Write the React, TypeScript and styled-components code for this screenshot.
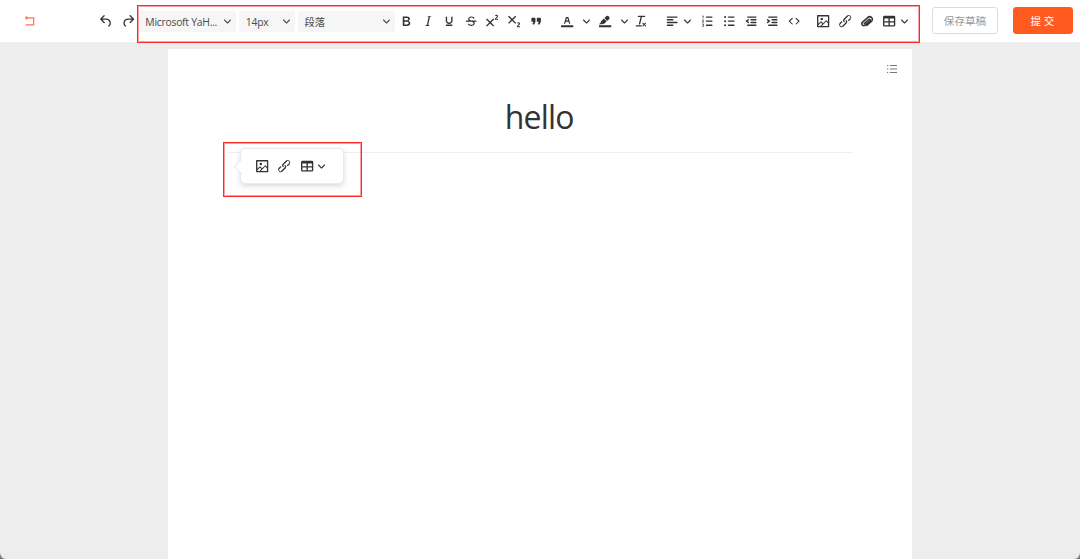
import React from 'react';
import styled, { createGlobalStyle } from 'styled-components';

const GlobalStyle = createGlobalStyle`
  * { box-sizing: border-box; }
  body {
    margin: 0;
    background: #ededed;
    font-family: "Open Sans", "Noto Sans CJK SC", sans-serif;
    overflow: hidden;
  }
  button { font-family: inherit; padding: 0; background: none; border: 0; }
`;

const Screen = styled.div`
  position: relative;
  display: flex;
  flex-direction: column;
  width: 1080px;
  height: 559px;
  overflow: hidden;
`;

const Header = styled.header`
  display: flex;
  align-items: center;
  height: 42px;
  flex: none;
  background: #fff;
`;

const BackButton = styled.button`
  display: flex;
  justify-content: center;
  width: 60px;
  margin-right: 34.5px;
`;

const ToolButton = styled.button<{ $width?: number; $left?: number }>`
  display: flex;
  align-items: center;
  justify-content: center;
  flex: none;
  width: ${(p) => p.$width ?? 21.7}px;
  height: 24px;
  margin-left: ${(p) => p.$left ?? 0}px;
  color: #333;
`;

const Tools = styled.div<{ $left?: number }>`
  display: flex;
  flex: none;
  align-items: center;
  margin-left: ${(p) => p.$left ?? 0}px;
  padding-top: 1px;
`;

const Glyph = styled.svg<{ $size?: number }>`
  display: block;
  flex: none;
  width: ${(p) => p.$size ?? 16.3}px;
  height: ${(p) => p.$size ?? 16.3}px;
  fill: currentColor;
`;

const Select = styled.div<{ $width: number }>`
  display: flex;
  align-items: center;
  justify-content: space-between;
  width: ${(p) => p.$width}px;
  height: 21px;
  margin-right: 3.3px;
  padding: 0 5px 0 6.5px;
  border-radius: 2px;
  background: #f6f6f6;
  color: #4a4a4a;
  font-size: 10.4px;
  line-height: 21px;
  white-space: nowrap;
`;

const SelectLabel = styled.span<{ $spacing?: number }>`
  padding-top: 2px;
  letter-spacing: ${(p) => p.$spacing ?? 0}px;
`;

const ActionButton = styled.button<{ $primary?: boolean }>`
  flex: none;
  width: ${(p) => (p.$primary ? 60 : 66)}px;
  height: 27px;
  border: 1px solid ${(p) => (p.$primary ? '#ff5b21' : '#dcdcdc')};
  border-radius: 3px;
  background: ${(p) => (p.$primary ? '#ff5b21' : '#fff')};
  color: ${(p) => (p.$primary ? '#fff' : '#999')};
  font-size: 10.6px;
  line-height: 26px;
`;

const Actions = styled.div`
  display: flex;
  gap: 14.5px;
  margin-left: auto;
  padding-right: 7.5px;
  padding-bottom: 1px;
`;

const Page = styled.main`
  position: relative;
  flex: 1;
  width: 744px;
  margin: 7px auto 0;
  padding: 44px 59px 0 60px;
  background: #fff;
`;

const Outline = styled.div`
  position: absolute;
  top: 14px;
  right: 14px;
  line-height: 0;
  color: #777;
`;

const Title = styled.h1`
  height: 60px;
  margin: 0;
  padding-right: 2.5px;
  border-bottom: 1px solid #efefef;
  color: #333;
  font-size: 32px;
  font-weight: 400;
  line-height: 48px;
  letter-spacing: -0.8px;
  text-align: center;
`;

const InsertBar = styled.div`
  position: absolute;
  top: 99px;
  left: 72px;
  display: flex;
  align-items: center;
  width: 104px;
  height: 36px;
  padding-left: 10.8px;
  padding-top: 1px;
  border: 1px solid #e9eaec;
  border-radius: 5px;
  background: #fff;
  box-shadow: 0 2px 5px rgba(34, 47, 62, 0.18);

  &::before {
    content: '';
    position: absolute;
    left: -5.5px;
    top: 12px;
    width: 10px;
    height: 10px;
    border-left: 1px solid #e9eaec;
    border-bottom: 1px solid #e9eaec;
    background: #fff;
    transform: rotate(45deg);
  }
`;

const Frame = styled.div<{ $x: number; $y: number; $w: number; $h: number }>`
  position: absolute;
  left: ${(p) => p.$x}px;
  top: ${(p) => p.$y}px;
  width: ${(p) => p.$w}px;
  height: ${(p) => p.$h}px;
  border: 1px solid #fd2a2a;
  box-shadow: inset 0 0 0 1px rgba(253, 42, 42, 0.45);
  pointer-events: none;
`;

const WindowCorner = styled.svg<{ $right?: boolean }>`
  position: absolute;
  bottom: 0;
  ${(p) => (p.$right ? 'right: 0; transform: scaleX(-1);' : 'left: 0;')}
  width: 6px;
  height: 6px;
  fill: #777;
`;

const line = (x: number, y: number, w: number) => `M${x} ${y}h${w}a1 1 0 0 1 0 2h${-w}a1 1 0 0 1 0-2Z`;

const cross = 'M15 9.4 10.4 14l4.6 4.6-1.4 1.4L9 15.4 4.4 20 3 18.6 7.6 14 3 9.4 4.4 8 9 12.6 13.6 8 15 9.4Z';

const paths = {
  undo: 'M6.4 8H12c3.7 0 6.2 2 6.8 5.1.6 2.7-.4 5.6-2.3 6.8a1 1 0 0 1-1-1.8c1.1-.6 1.8-2.7 1.4-4.6-.5-2.1-2.1-3.5-4.9-3.5H6.4l3.3 3.3a1 1 0 1 1-1.4 1.4l-5-5a1 1 0 0 1 0-1.4l5-5a1 1 0 0 1 1.4 1.4L6.4 8Z',
  redo: 'M17.6 10H12c-2.8 0-4.4 1.4-4.9 3.5-.4 2 .3 4 1.4 4.6a1 1 0 1 1-1 1.8c-2-1.2-2.9-4.1-2.3-6.8.6-3 3-5.1 6.8-5.1h5.6l-3.3-3.3a1 1 0 1 1 1.4-1.4l5 5a1 1 0 0 1 0 1.4l-5 5a1 1 0 0 1-1.4-1.4l3.3-3.3Z',
  bold: 'M7.8 19c-.3 0-.5 0-.6-.2l-.2-.5V5.7c0-.2 0-.4.2-.5l.6-.2h5c1.5 0 2.7.3 3.5 1 .7.6 1.1 1.4 1.1 2.5a3 3 0 0 1-.6 1.9c-.4.6-1 1-1.6 1.2.4.1.9.3 1.3.6s.8.7 1 1.2c.4.4.5 1 .5 1.6 0 1.3-.4 2.3-1.3 3-.8.7-2.1 1-3.8 1H7.8Zm5-8.3c.6 0 1.2-.1 1.6-.5.4-.3.6-.7.6-1.3 0-1.1-.8-1.7-2.3-1.7H9.3v3.5h3.4Zm.5 6c.7 0 1.3-.1 1.7-.4.4-.4.6-.9.6-1.5s-.2-1-.7-1.4c-.4-.3-1-.4-2-.4H9.4v3.8h4Z',
  italic: 'm16.7 4.7-.1.9h-.3c-.6 0-1 0-1.4.3-.3.3-.4.6-.5 1.1l-2.1 9.8v.6c0 .5.4.8 1.4.8h.2l-.2.8H8l.2-.8h.2c1.1 0 1.8-.5 2-1.5l2-9.8.1-.5c0-.6-.4-.8-1.4-.8h-.3l.2-.9h5.8Z',
  underline: 'M16 5c.6 0 1 .4 1 1v5.5a4 4 0 0 1-.4 1.8l-1 1.4a5.3 5.3 0 0 1-5.5 1 5 5 0 0 1-1.6-1c-.5-.4-.8-.9-1.1-1.4a4 4 0 0 1-.4-1.8V6c0-.6.4-1 1-1s1 .4 1 1v5.5c0 .3 0 .6.2 1l.6.7a3.3 3.3 0 0 0 2.2.8 3.4 3.4 0 0 0 2.2-.8c.3-.2.4-.5.6-.8l.2-.9V6c0-.6.4-1 1-1ZM8 17h8c.6 0 1 .4 1 1s-.4 1-1 1H8a1 1 0 0 1 0-2Z',
  strike: 'M15.6 8.5c-.5-.7-1-1.1-1.3-1.3-.6-.4-1.3-.6-2-.6-2.7 0-2.8 1.7-2.8 2.1 0 1.6 1.8 2 3.2 2.3 4.4.9 4.6 2.8 4.6 3.9 0 1.4-.7 4.1-5 4.1A6.2 6.2 0 0 1 7 16.4l1.5-1.1c.4.6 1.6 2 3.7 2 1.6 0 2.5-.4 3-1.2.4-.8.3-2-.8-2.6-.7-.4-1.6-.7-2.9-1-1-.2-3.9-.8-3.9-3.6C7.6 6 10.3 5 12.4 5c2.9 0 4.2 1.6 4.7 2.4l-1.5 1.1Z' + line(5, 11, 14),
  quote: 'M7.5 17h.9c.4 0 .7-.2.9-.6L11 13V8c0-.6-.4-1-1-1H6a1 1 0 0 0-1 1v4c0 .6.4 1 1 1h2l-1.3 2.7a1 1 0 0 0 .8 1.3Zm8 0h.9c.4 0 .7-.2.9-.6L19 13V8c0-.6-.4-1-1-1h-4a1 1 0 0 0-1 1v4c0 .6.4 1 1 1h2l-1.3 2.7a1 1 0 0 0 .8 1.3Z',
  textColor: 'M3 18h18v3H3ZM8.7 16h-.8a.5.5 0 0 1-.5-.6l2.7-9c.1-.3.3-.4.5-.4h2.8c.2 0 .4.1.5.4l2.7 9a.5.5 0 0 1-.5.6h-.8a.5.5 0 0 1-.4-.4l-.7-2.2c0-.3-.3-.4-.5-.4h-3.4c-.2 0-.4.1-.5.4l-.7 2.2c0 .3-.2.4-.4.4Zm2.6-7.6-.6 2a.5.5 0 0 0 .5.6h1.6a.5.5 0 0 0 .5-.6l-.6-2c0-.3-.3-.4-.5-.4h-.4c-.2 0-.4.1-.5.4Z',
  highlight: 'M3 18h18v3H3ZM7.7 16.7H3l3.3-3.3-.7-.8L10.2 8l4 4.1-4 4.2c-.2.2-.6.2-.8 0l-.6-.7-1.1 1.1ZM11 7.4l3-2.9a2 2 0 0 1 2.6 0L18 6c.7.7.7 2 0 2.7l-2.9 2.9Z',
  clear: 'M13.2 6a1 1 0 0 1 0 .2l-2.6 10a1 1 0 0 1-1 .8h-.2a.8.8 0 0 1-.8-1l2.6-10H8a1 1 0 1 1 0-2h9a1 1 0 0 1 0 2h-3.8ZM5 18h7a1 1 0 0 1 0 2H5a1 1 0 0 1 0-2Zm13 1.5L16.5 18 15 19.5a.7.7 0 0 1-1-1l1.5-1.5-1.5-1.5a.7.7 0 0 1 1-1l1.5 1.5 1.5-1.5a.7.7 0 0 1 1 1L17.5 17l1.5 1.5a.7.7 0 0 1-1 1Z',
  align: line(5, 5, 14) + line(5, 9, 8) + line(5, 13, 14) + line(5, 17, 8),
  bullets: line(11, 5, 8) + line(11, 11, 8) + line(11, 17, 8) + 'M4.5 6a1.5 1.5 0 1 1 3 0 1.5 1.5 0 0 1-3 0Zm0 6a1.5 1.5 0 1 1 3 0 1.5 1.5 0 0 1-3 0Zm0 6a1.5 1.5 0 1 1 3 0 1.5 1.5 0 0 1-3 0Z',
  outdent: line(7, 5, 12) + line(12, 9, 7) + line(12, 13, 7) + line(7, 17, 12) + 'M8.6 13.2a1 1 0 0 1-1.2 1.6l-3-2a1 1 0 0 1 0-1.6l3-2a1 1 0 0 1 1.2 1.6L6.8 12l1.8 1.2Z',
  indent: line(7, 5, 12) + line(12, 9, 7) + line(12, 13, 7) + line(7, 17, 12) + 'M4.4 13.2 6.2 12l-1.8-1.2a1 1 0 0 1 1.2-1.6l3 2a1 1 0 0 1 0 1.6l-3 2a1 1 0 1 1-1.2-1.6Z',
  code: 'M9.8 15.7c.3.3.3.8 0 1-.3.4-.9.4-1.2 0l-4.4-4.1a.8.8 0 0 1 0-1.2l4.4-4.2c.3-.3.9-.3 1.2 0 .3.3.3.8 0 1.1L6 12l3.8 3.7ZM14.2 15.7c-.3.3-.3.8 0 1 .4.4.9.4 1.2 0l4.4-4.1c.3-.3.3-.9 0-1.2l-4.4-4.2a.8.8 0 0 0-1.2 0c-.3.3-.3.8 0 1.1L18 12l-3.8 3.7Z',
  image: 'm5 15.7 3.3-3.2c.3-.3.7-.3 1 0L12 15l4.1-4c.3-.4.8-.4 1 0l2 1.9V5H5v10.7ZM5 18V19h3l2.8-2.9-2-2L5 17.9Zm14-3-2.5-2.4-6.4 6.5H19v-4ZM4 3h16c.6 0 1 .4 1 1v16c0 .6-.4 1-1 1H4a1 1 0 0 1-1-1V4c0-.6.4-1 1-1Zm6 7.5a1.8 1.8 0 1 0 0-3.6 1.8 1.8 0 0 0 0 3.6Z',
  link: 'M6.2 12.3a1 1 0 0 1 1.4 1.4l-2 2a2 2 0 1 0 2.6 2.8l4.8-4.8a1 1 0 0 0 0-1.4 1 1 0 1 1 1.4-1.3 2.9 2.9 0 0 1 0 4L9.6 20a3.9 3.9 0 0 1-5.5-5.5l2-2Zm11.6-.6a1 1 0 0 1-1.4-1.4l2-2a2 2 0 1 0-2.6-2.8L11 10.3a1 1 0 0 0 0 1.4A1 1 0 1 1 9.6 13a2.9 2.9 0 0 1 0-4L14.4 4a3.9 3.9 0 0 1 5.5 5.5l-2 2Z',
  table: 'M19 4a2 2 0 0 1 2 2v12a2 2 0 0 1-2 2H5a2 2 0 0 1-2-2V6c0-1.1.9-2 2-2h14ZM5 14v4h6v-4H5Zm14 0h-6v4h6v-4Zm0-6h-6v4h6V8ZM5 12h6V8H5v4Z',
};

type IconName = keyof typeof paths;

const Icon = ({ name }: { name: IconName }) => (
  <Glyph viewBox="0 0 24 24">
    <path fillRule={name === 'strike' ? 'nonzero' : 'evenodd'} d={paths[name]} />
  </Glyph>
);

const Chevron = () => (
  <Glyph $size={7} viewBox="0 0 10 10">
    <path d="M8.7 2.2c.3-.3.8-.3 1 0 .4.4.4.9 0 1.2L5.7 7.8c-.3.3-.9.3-1.2 0L.2 3.4a.8.8 0 0 1 0-1.2c.3-.3.8-.3 1.1 0L5 6l3.7-3.8Z" />
  </Glyph>
);

const Script = ({ raised }: { raised?: boolean }) => (
  <Glyph viewBox="0 0 24 24">
    <path d={cross} transform={raised ? undefined : 'translate(0 -4)'} />
    <path
      transform={raised ? 'translate(0 -11)' : undefined}
      d="M16.8 15.3c.4-1.1 3.2-1.2 3.2.5 0 1.4-3.3 2-3.3 4.5h4"
      fill="none" stroke="currentColor" strokeWidth="1.5"
    />
  </Glyph>
);

const NumberedList = () => (
  <Glyph viewBox="0 0 24 24">
    <path d={line(11, 5, 8) + line(11, 11, 8) + line(11, 17, 8)} />
    <path d="M4.7 4.4h1.4v3.4M4.5 10.3h2.2v1.2l-2 2h2.4M4.5 16.3h2.3l-1 1.6c1.6.2 1.4 2-.1 2H4.4" fill="none" stroke="currentColor" strokeWidth="1.1" />
  </Glyph>
);

const Attachment = () => (
  <Glyph viewBox="0 0 24 24">
    <path
      d="m7.8 15.6 6.7-6c1.4-1.2 3 .5 1.7 1.8l-6.9 6.3c-3.2 2.8-7-1.4-4-4.2l7.4-6.7c4.3-3.8 9.6 1.8 5.4 5.7l-6.6 6"
      fill="none" stroke="currentColor" strokeWidth="2.2" strokeLinecap="round"
    />
  </Glyph>
);

const Tool = ({ name, left, width }: { name: IconName; left?: number; width?: number }) => (
  <ToolButton $left={left} $width={width}><Icon name={name} /></ToolButton>
);

export default function App() {
  return (
    <Screen>
      <GlobalStyle />
      <Header>
        <BackButton aria-label="返回">
          <svg width="12" height="12" viewBox="0 0 12 12" fill="none" stroke="#ff7345" strokeWidth="1.2">
            <path d="M1.4 2.9h8.3v7H1.6M3.2 1.4 1.7 2.9l1.5 1.5" />
          </svg>
        </BackButton>
        <Tools $left={0.8}>
          <Tool name="undo" />
          <Tool name="redo" left={0.2} />
        </Tools>
        <Select $width={97}><SelectLabel $spacing={-0.27}>Microsoft YaH...</SelectLabel><Chevron /></Select>
        <Select $width={55.5}><SelectLabel $spacing={-0.2}>14px</SelectLabel><Chevron /></Select>
        <Select $width={97}><SelectLabel>段落</SelectLabel><Chevron /></Select>
        <Tools $left={-2.9}>
          <Tool name="bold" />
          <Tool name="italic" />
          <Tool name="underline" left={-0.4} />
          <Tool name="strike" />
          <ToolButton><Script raised /></ToolButton>
          <ToolButton><Script /></ToolButton>
          <Tool name="quote" />
        </Tools>
        <Tools $left={9.9}>
          <Tool name="textColor" />
          <ToolButton $width={16}><Chevron /></ToolButton>
          <Tool name="highlight" />
          <ToolButton $width={16}><Chevron /></ToolButton>
          <Tool name="clear" left={-1.5} />
        </Tools>
        <Tools $left={9.1}>
          <Tool name="align" />
          <ToolButton $width={12} $left={-1.5}><Chevron /></ToolButton>
          <ToolButton $left={3}><NumberedList /></ToolButton>
          <Tool name="bullets" />
          <Tool name="outdent" />
          <Tool name="indent" />
          <Tool name="code" />
        </Tools>
        <Tools $left={7.6}>
          <Tool name="image" />
          <Tool name="link" />
          <ToolButton><Attachment /></ToolButton>
          <Tool name="table" left={1} />
          <ToolButton $width={12} $left={-2}><Chevron /></ToolButton>
        </Tools>
        <Actions>
          <ActionButton>保存草稿</ActionButton>
          <ActionButton $primary>提 交</ActionButton>
        </Actions>
      </Header>
      <Page>
        <Outline>
          <svg width="12" height="12" viewBox="0 0 12 12" fill="none" stroke="currentColor" strokeWidth="1">
            <path d="M1 2.5h1.3M4 2.5h7M1 6h1.3M4 6h7M1 9.5h1.3M4 9.5h7" />
          </svg>
        </Outline>
        <Title>hello</Title>
        <InsertBar>
          <Tool name="image" />
          <Tool name="link" />
          <Tool name="table" left={1} />
          <ToolButton $width={12} $left={-2}><Chevron /></ToolButton>
        </InsertBar>
      </Page>
      <Frame $x={137} $y={5} $w={782.5} $h={38} />
      <Frame $x={223} $y={142} $w={139} $h={55} />
      <WindowCorner viewBox="0 0 6 6"><path d="M0 0Q.5 5.5 6 6H0Z" /></WindowCorner>
      <WindowCorner $right viewBox="0 0 6 6"><path d="M0 0Q.5 5.5 6 6H0Z" /></WindowCorner>
    </Screen>
  );
}
